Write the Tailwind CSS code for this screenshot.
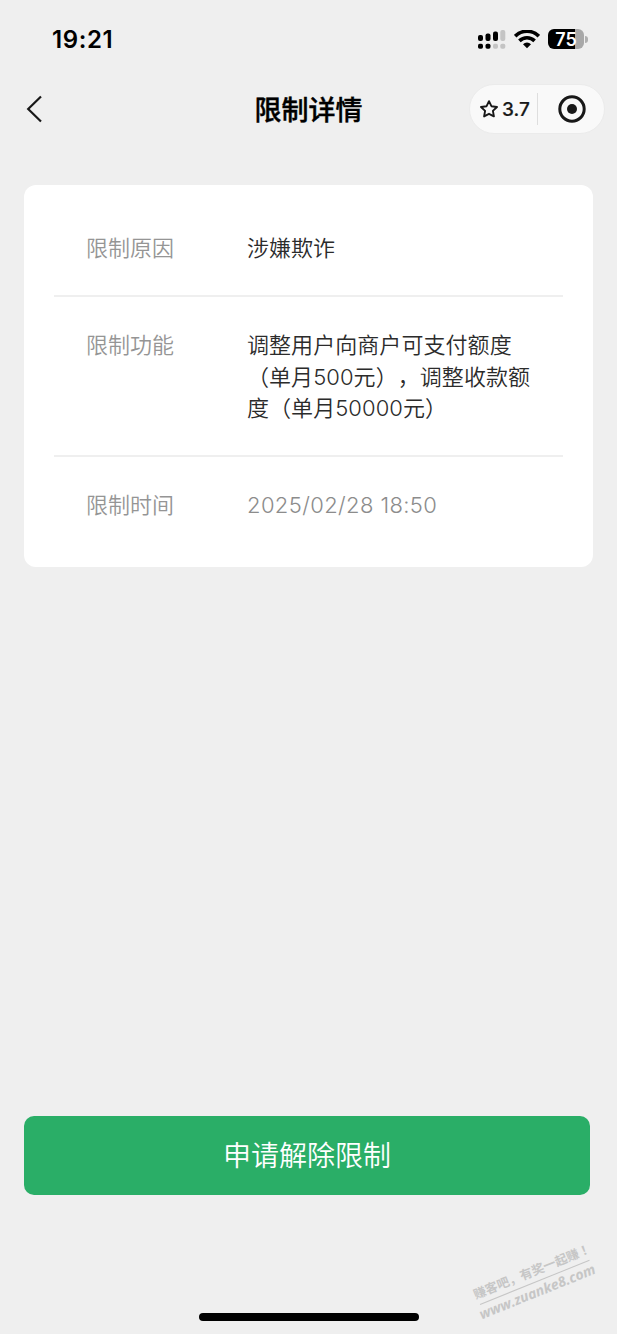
<!DOCTYPE html>
<html lang="zh-CN">
<head>
<meta charset="utf-8">
<meta name="viewport" content="width=device-width, initial-scale=1">
<title>限制详情</title>
<script src="https://cdn.jsdelivr.net/npm/@tailwindcss/browser@4"></script>
</head>
<body class="bg-[#efefef]">
<div class="relative flex h-[1334px] w-[617px] flex-col overflow-hidden bg-[#efefef] font-['Inter','Noto_Sans_CJK_SC',sans-serif] [text-spacing-trim:space-all]">
  <header class="flex h-20 shrink-0 items-center justify-between pl-[52px] pr-[29px]">
    <div class="text-[24px] font-semibold leading-none tracking-[0.6px] text-black">19:21</div>
    <div class="flex items-center gap-2">
      <svg class="h-5 w-7" viewBox="0 0 28 20">
        <rect x="0" y="5" width="5" height="6" rx="2"/><rect x="7.5" y="3.5" width="5" height="7.5" rx="2"/><rect x="15" y="1.5" width="5" height="9.5" rx="2"/><rect x="22.3" y="0" width="5" height="11" rx="2" fill="#c4c4c4"/>
        <rect x="0" y="13.7" width="5" height="5" rx="1.7"/><rect x="7.5" y="13.7" width="5" height="5" rx="1.7"/><rect x="15" y="13.7" width="5" height="5" rx="1.7" fill="#c4c4c4"/><rect x="22.3" y="13.7" width="5" height="5" rx="1.7" fill="#c4c4c4"/>
      </svg>
      <svg class="h-5 w-[26px]" viewBox="0 0 26 20" fill="none" stroke="#000" stroke-width="3.6">
        <path d="M1.2 6.1a16.8 16.8 0 0 1 23.6 0M5.4 10.9a10.8 10.8 0 0 1 15.2 0"/>
        <path d="M9 14.2a5.8 5.8 0 0 1 8 0L13 18.2Z" fill="#000" stroke="none"/>
      </svg>
      <div class="-mt-[2px] flex items-center gap-px">
        <div class="flex h-5 w-9 items-center justify-center overflow-hidden rounded-[6px] bg-linear-to-r from-black from-75% to-[#a8a8a8] to-75% pt-px text-[18px] font-semibold leading-none text-white">75</div>
        <div class="h-[7px] w-[3px] rounded-r-full bg-[#b0b0b0]"></div>
      </div>
    </div>
  </header>

  <nav class="grid h-[58px] shrink-0 grid-cols-[136px_1fr_136px] items-center px-3">
    <svg class="ml-[14px] h-7 w-4" viewBox="0 0 16 28" fill="none" stroke="#181818" stroke-width="2.2"><path d="M15 1.5 2.2 14 15 26.5"/></svg>
    <h1 class="pt-[3px] text-center text-[27px] font-medium leading-none text-black [-webkit-text-stroke:0.4px_black]">限制详情</h1>
    <div class="flex h-[50px] w-[136px] items-center rounded-full border border-[#ebebeb] bg-[#f9f9f9]">
      <div class="flex w-[67px] shrink-0 items-center gap-1 pl-[10px]">
        <svg class="h-[18px] w-[18px] shrink-0" viewBox="0 0 18 18" fill="none" stroke="#181818" stroke-width="1.9" stroke-linejoin="round"><path d="m9 1.2 2.4 5 5.6.8-4.1 3.9 1 5.5L9 13.8l-4.9 2.6 1-5.5L1 7l5.6-.8Z"/></svg>
        <span class="text-[19px] font-medium leading-none text-[#181818] [-webkit-text-stroke:0.2px_#181818]">3.7</span>
      </div>
      <div class="h-8 w-px bg-[#dedede]"></div>
      <svg class="ml-5 h-7 w-7" viewBox="0 0 28 28"><circle cx="14" cy="14" r="12.2" fill="none" stroke="#181818" stroke-width="3"/><circle cx="14" cy="14" r="5" fill="#181818"/></svg>
    </div>
  </nav>

  <main class="ml-6 mt-[47px] h-[382px] w-[569px] shrink-0 rounded-xl bg-white px-[30px] text-[22px] leading-[31.7px]">
    <dl class="flex flex-col font-[350]">
      <div class="flex h-[112px] border-b-2 border-[#efefef] pl-8 pt-12">
        <dt class="w-[161px] text-[#959595]">限制原因</dt>
        <dd class="whitespace-nowrap text-[#2b2b2b]">涉嫌欺诈</dd>
      </div>
      <div class="flex h-[160px] border-b-2 border-[#efefef] pl-8 pt-[33px]">
        <dt class="w-[161px] text-[#959595]">限制功能</dt>
        <dd class="whitespace-nowrap tracking-[0.06px] text-[#2b2b2b]">调整用户向商户可支付额度<br>（单月500元），调整收款额<br>度（单月50000元）</dd>
      </div>
      <div class="flex h-[110px] pl-8 pt-[33px]">
        <dt class="w-[161px] text-[#959595]">限制时间</dt>
        <dd class="whitespace-nowrap tracking-[0.38px] text-[#8c8c8c]">2025/02/28 18:50</dd>
      </div>
    </dl>
  </main>

  <button class="ml-6 mt-[549px] h-[79px] w-[566px] shrink-0 rounded-[10px] bg-[#2aae67] pt-px text-[28px] font-[350] text-white">申请解除限制</button>

  <div class="absolute left-[475px] top-[1261px] w-[118px] -rotate-[22deg] whitespace-nowrap font-bold text-[#c6c6c6]">
    <div class="border-b border-[#c6c6c6] text-[12.5px] leading-[20px]"><span class="-ml-0.5 font-['Noto_Sans_CJK_SC',sans-serif]">赚客吧，有奖一起赚<span lang="zh-TW" class="font-['Noto_Sans_CJK_TC',sans-serif]">！</span></span></div>
    <div class="-ml-1 font-['Open_Sans',sans-serif] text-[14px] italic leading-[17px]">www.zuanke8.com</div>
  </div>
  <div class="absolute left-[199px] top-[1313px] h-2 w-[220px] rounded-full bg-black"></div>
</div>
</body>
</html>
